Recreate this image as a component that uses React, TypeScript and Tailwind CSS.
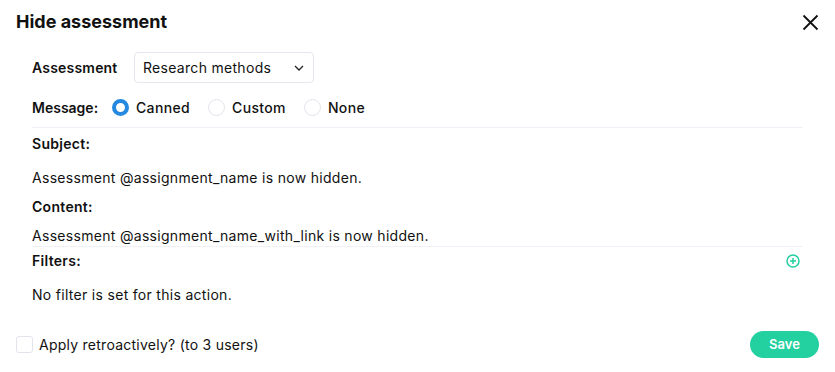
import React, { useState } from 'react';

const Radio: React.FC<{ checked: boolean; label: string; onClick: () => void }> = ({ checked, label, onClick }) => (
  <label className="flex items-center gap-[7px] cursor-pointer" onClick={onClick}>
    <span
      className={
        checked
          ? 'w-[17px] h-[17px] rounded-full border-[4px] border-[#2589e0] bg-white'
          : 'w-[17px] h-[17px] rounded-full border border-[#e3e3ec] bg-white'
      }
    />
    <span className="text-[14px] font-medium text-[#111] tracking-[0.35px]">{label}</span>
  </label>
);

const App: React.FC = () => {
  const [message, setMessage] = useState('canned');
  const [retro, setRetro] = useState(false);

  return (
    <div className="w-[835px] h-[372px] bg-white text-[#111] font-['Inter','Liberation_Sans',sans-serif] relative">
      <div className="flex items-center justify-between pl-4 pr-[16px] pt-[10px]">
        <h2 className="text-[18px] font-bold leading-[24px]">Hide assessment</h2>
        <button className="text-[#111]">
          <svg width="17" height="17" viewBox="0 0 17 17" fill="none" stroke="currentColor" strokeWidth="1.8">
            <path d="M1.5 1.5l14 14M15.5 1.5l-14 14" />
          </svg>
        </button>
      </div>

      <div className="pl-8 pr-8 mt-[18px]">
        <div className="flex items-center">
          <span className="w-[102px] text-[14px] font-semibold tracking-[0.2px]">Assessment</span>
          <div className="w-[180px] h-[31px] border border-[#e6e6ee] rounded-[4px] flex items-center justify-between pl-[8px] pr-[9px]">
            <span className="text-[14px] tracking-[0.3px]">Research methods</span>
            <svg width="10" height="6" viewBox="0 0 10 6" fill="none" stroke="#222" strokeWidth="1.3">
              <path d="M1 1l4 4 4-4" />
            </svg>
          </div>
        </div>

        <div className="flex items-center mt-[12px] h-[24px]">
          <span className="w-[80px] text-[14px] font-semibold">Message:</span>
          <div className="flex items-center gap-[18px]">
            <Radio checked={message === 'canned'} label="Canned" onClick={() => setMessage('canned')} />
            <Radio checked={message === 'custom'} label="Custom" onClick={() => setMessage('custom')} />
            <Radio checked={message === 'none'} label="None" onClick={() => setMessage('none')} />
          </div>
        </div>

        <div className="border-t border-[#f0f0f7] mt-[8px]" />

        <div className="pt-[6px] text-[14px] tracking-[0.3px]">
          <div className="font-semibold leading-[20px]">Subject:</div>
          <div className="leading-[20px] mt-[14px]">Assessment @assignment_name is now hidden.</div>
          <div className="font-semibold leading-[20px] mt-[9px]">Content:</div>
          <div className="leading-[20px] mt-[9px]">Assessment @assignment_name_with_link is now hidden.</div>
        </div>

        <div className="border-t border-[#f0f0f7] mt-0" />

        <div className="pt-[4px] text-[14px] tracking-[0.3px]">
          <div className="flex items-center justify-between">
            <span className="font-semibold leading-[20px]">Filters:</span>
            <svg width="14" height="14" viewBox="0 0 14 14" fill="none" stroke="#22cfa0" strokeWidth="1.5" className="mr-[3px]">
              <circle cx="7" cy="7" r="6" />
              <path d="M7 4v6M4 7h6" />
            </svg>
          </div>
          <div className="leading-[20px] mt-[14px]">No filter is set for this action.</div>
        </div>
      </div>

      <div className="flex items-center justify-between pl-4 pr-4 mt-[26px]">
        <label className="flex items-center gap-[6px] cursor-pointer" onClick={() => setRetro(!retro)}>
          <span className={retro ? 'w-[17px] h-[17px] rounded-[3px] bg-[#2589e0]' : 'w-[17px] h-[17px] rounded-[3px] border border-[#e3e3ec] bg-white'} />
          <span className="text-[14px] tracking-[0.25px]">Apply retroactively? (to 3 users)</span>
        </label>
        <button className="w-[69px] h-[27px] rounded-full bg-[#22d0a0] text-white text-[13px] font-semibold">Save</button>
      </div>
    </div>
  );
};

export default App;
